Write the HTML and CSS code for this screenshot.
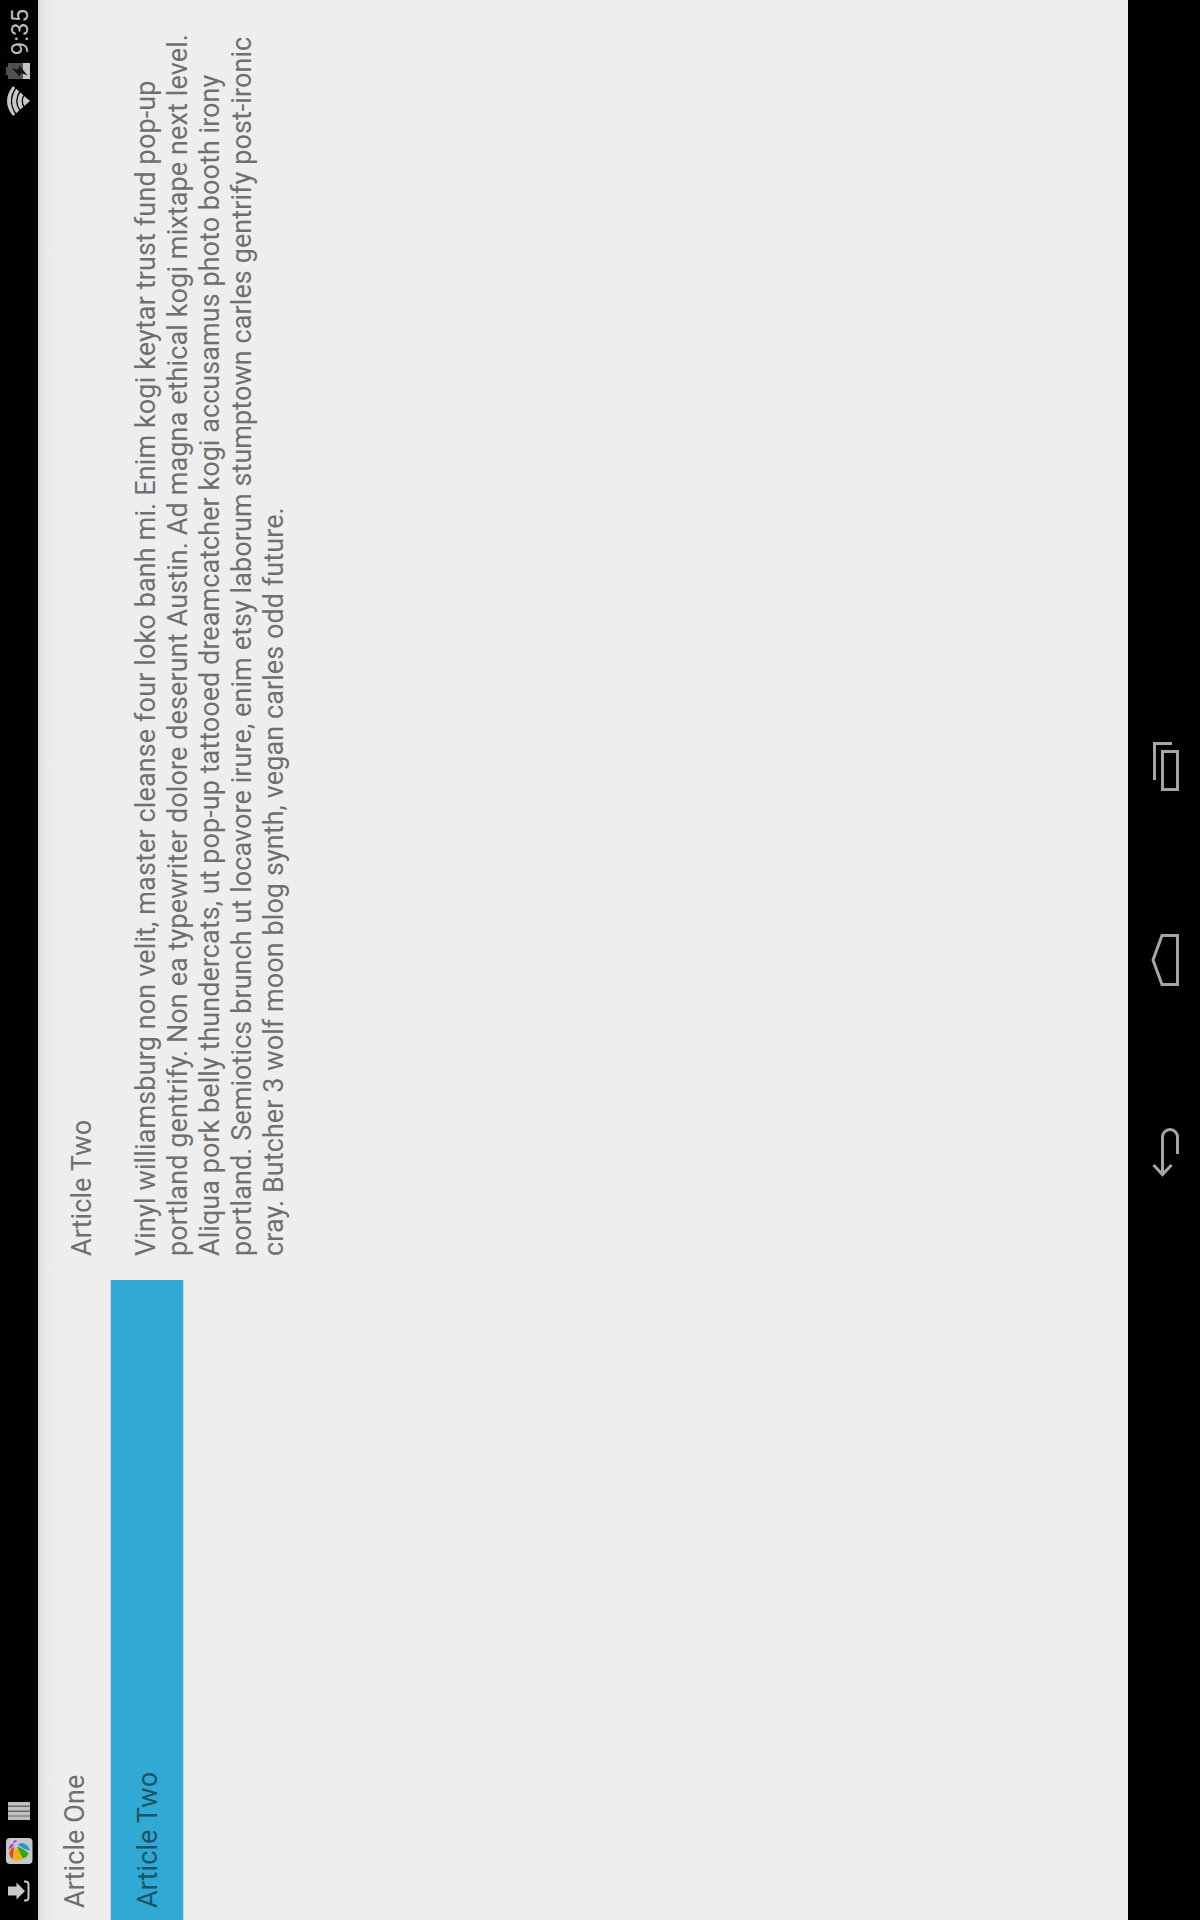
FILE: index.html
```html
<!DOCTYPE html>
<html lang="en">
<head>
<meta charset="utf-8">
<title>Articles</title>
<link rel="stylesheet" href="styles.css">
</head>
<body>
<div class="device">
  <header class="status">
    <div class="notifications">
      <svg class="note" width="28" height="38" viewBox="0 0 28 38">
        <path d="M9.500 8h9v8.500H22.500L14 25 5.500 16.500h4z" fill="#c8c8c8"/>
        <path d="M4.500 24v1.500q0 3 3 3h13q3 0 3-3V24" fill="none" stroke="#c8c8c8" stroke-width="2"/>
      </svg>
      <svg class="note" width="28" height="38" viewBox="0 0 28 38">
        <g transform="matrix(0 1 -1 0 27 6)">
          <rect width="26.500" height="26" rx="4" fill="#c5c9c9"/>
          <path d="M12 6.500Q15 4 18 5.500q5 2 6 7Q18 12 12 6.500z" fill="#1d9cda"/>
          <path d="M11 8q7 3 11.500 7-.5 4-5.500 5.500Q13 15 11 8z" fill="#39a51b"/>
          <path d="M9.500 9Q15 15 16.500 21q-4 3-9 1Q7.500 15 9.500 9z" fill="#f0ae10"/>
          <path d="M8 8.500Q8 15 6.500 21.500 1 16 5 11z" fill="#e7481d"/>
          <path d="M2.500 11.500Q3 6 8 5.500 7.500 9 2.500 11.500z" fill="#b53bd0"/>
          <path d="M7.500 4.500q1-1.500 3-1.500" fill="none" stroke="#b53bd0" stroke-width="1.800"/>
        </g>
      </svg>
      <svg class="note" width="28" height="38" viewBox="0 0 28 38">
        <path d="M5 8h18v22H5z" fill="#686868"/>
        <path d="M5 8h3.500v22H5zM9.500 8h3.500v22H9.500zM14.500 8H18v22h-3.500zM19.500 8H23v22h-3.500z" fill="#c0c0c0"/>
      </svg>
    </div>
    <div class="system">
      <svg width="30" height="38" viewBox="0 0 30 38">
        <path d="M15 30 0 13Q15 1 30 13z" fill="#c8c8c8"/>
        <path d="M1 16.500Q15 6.500 29 16.500M4.500 20.500Q15 13 25.500 20.500M8.500 24.500Q15 20 21.500 24.500" fill="none" stroke="#000" stroke-width="1.300"/>
      </svg>
      <svg class="battery" width="16" height="38" viewBox="0 0 16 38">
        <path d="M4 6h8v2h4v22H0V8h4z" fill="#505050"/>
        <path d="M0 23h16v7H0z" fill="#c6c6c6"/>
        <path d="M11 12 2.500 19.500 6 21 3.500 27.500 13.500 19.500 9.500 18z" fill="#151515"/>
      </svg>
      <span class="clock">9:35</span>
    </div>
  </header>
  <main class="content">
    <ul class="list">
      <li class="item">Article One</li>
      <li class="item selected">Article Two</li>
    </ul>
    <article class="detail">
      <h1 class="title">Article Two</h1>
      <p class="body">
        <span class="line loosest">Vinyl williamsburg non velit, master cleanse four loko banh mi. Enim kogi keytar trust fund pop-up</span>
        <span class="line looser">portland gentrify. Non ea typewriter dolore deserunt Austin. Ad magna ethical kogi mixtape next level.</span>
        <span class="line snug">Aliqua pork belly thundercats, ut pop-up tattooed dreamcatcher kogi accusamus photo booth irony</span>
        <span class="line">portland. Semiotics brunch ut locavore irure, enim etsy laborum stumptown carles gentrify post-ironic</span>
        <span class="line">cray. Butcher 3 wolf moon blog synth, vegan carles odd future.</span>
      </p>
    </article>
  </main>
  <nav class="nav">
    <svg class="key" viewBox="0 0 192 72">
      <path d="M74 34.500h37a7.500 7.500 0 0 1 0 15H94"/>
      <path d="M83 25.500 73.500 34.500 83 43.500"/>
    </svg>
    <svg class="key" viewBox="0 0 192 72">
      <path d="M71.500 49.500v-15.500L96 25l24.500 9v15.500z"/>
    </svg>
    <svg class="key" viewBox="0 0 192 72">
      <path d="M74.500 34.500h38v15h-38z"/>
      <path d="M84 26.500h36.500V44"/>
    </svg>
  </nav>
</div>
</body>
</html>
```
FILE: styles.css
```css
html {
  overflow: hidden;
}

body {
  margin: 0;
  width: 1200px;
  height: 1920px;
  overflow: hidden;
  background: #000;
  font-family: Roboto, sans-serif;
}

/* landscape tablet turned a quarter turn counter-clockwise */
.device {
  width: 1920px;
  height: 1200px;
  display: flex;
  flex-direction: column;
  transform-origin: 0 0;
  transform: translateY(1920px) rotate(-90deg);
}

svg {
  display: block;
}

.status {
  height: 38px;
  display: flex;
  justify-content: space-between;
  padding: 0 9px 0 15px;
  background: #000;
}

.notifications {
  display: flex;
  gap: 12px;
}

.system {
  display: flex;
}

.battery {
  margin: 0 8px 0 7px;
}

.clock {
  font-size: 24px;
  line-height: 40px;
  color: #bebebe;
}

.content {
  height: 1090px;
  display: flex;
  background: linear-gradient(#d8d8d8, #e4e4e4 3px, #eaeaea 9px, #eee 20px);
  color: #6f6f6f;
  font-size: 27px;
  line-height: 32px;
}

.list {
  width: 640px;
  margin: 0;
  padding: 0;
  list-style: none;
}

.item {
  height: 72px;
  padding-left: 12px;
  border-bottom: 1px solid #d2d2d2;
  line-height: 74px;
  letter-spacing: 0.1px;
}

.selected {
  background: #31a9d5;
  color: #1b5469;
}

.detail {
  padding: 28px 24px;
  white-space: nowrap;
}

.title {
  margin: 0 0 32px;
  font-size: 27px;
  font-weight: 400;
  letter-spacing: 0.1px;
}

.body {
  margin: 0;
}

.line {
  display: block;
  letter-spacing: 0.08px;
}

.loosest {
  letter-spacing: 0.128px;
}

.looser {
  letter-spacing: 0.112px;
}

.snug {
  letter-spacing: 0.055px;
}

.nav {
  height: 72px;
  display: flex;
  justify-content: center;
  background: #000;
}

.key {
  width: 192px;
  height: 72px;
  fill: none;
  stroke: #a5a5a5;
  stroke-width: 3;
}
```
